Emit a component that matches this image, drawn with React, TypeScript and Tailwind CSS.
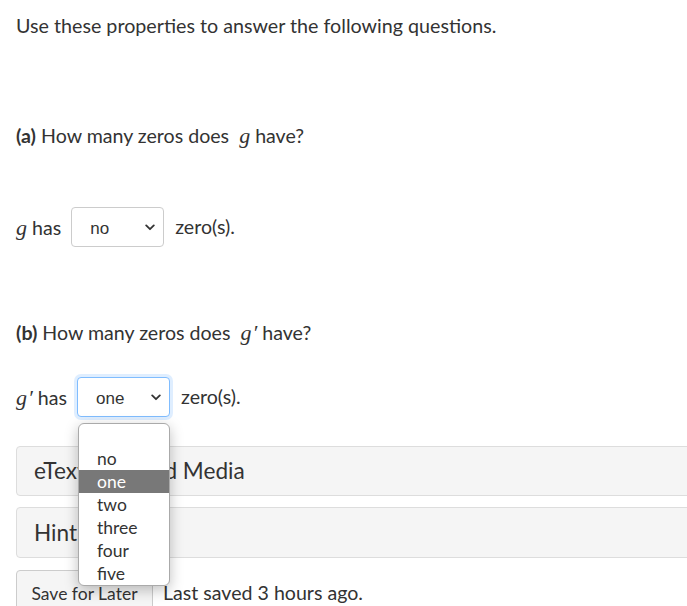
const OPTIONS = ['', 'no', 'one', 'two', 'three', 'four', 'five'];

function Chevron() {
  return (
    <svg width="10" height="7" viewBox="0 0 10 7" aria-hidden="true">
      <path d="M1.2 1.4 L5 5.2 L8.8 1.4" fill="none" stroke="#333" strokeWidth="1.8" strokeLinecap="round" strokeLinejoin="round" />
    </svg>
  );
}

function MathVar({ prime }: { prime?: boolean }) {
  return (
    <span className="font-['Liberation_Serif','Times_New_Roman',serif] text-[22px] italic">
      g{prime && <span className="ml-[1px]">′</span>}
    </span>
  );
}

function SelectBox({ value, focused }: { value: string; focused?: boolean }) {
  return (
    <div
      className={`flex h-[40px] w-[93px] items-center justify-between rounded-[4px] border bg-white pl-[18px] pr-[8px] font-['Liberation_Sans',Arial,sans-serif] text-[17px] text-[#333] ${
        focused ? 'border-[#80bdff] shadow-[0_0_0_3px_rgba(128,189,255,0.25)]' : 'border-[#ccc]'
      }`}
    >
      <span className="pt-[3px]">{value}</span>
      <Chevron />
    </div>
  );
}

export default function App() {
  return (
    <div className="relative h-[606px] w-[687px] overflow-hidden bg-white font-['Lato','Open_Sans',sans-serif] text-[#333]">
      <div className="w-[720px] pl-4 pt-[12px]">
        <p className="h-[28px] text-[19.7px] leading-[28px]">Use these properties to answer the following questions.</p>

        <p className="mt-[82px] h-[28px] text-[19.6px] leading-[28px]">
          <span className="font-bold">(a)</span> How many zeros does&nbsp; <MathVar /> have?
        </p>

        <div className="mt-[57px] flex h-[40px] items-center text-[19.6px]">
          <span className="mr-[10px]">
            <MathVar /> has
          </span>
          <SelectBox value="no" />
          <span className="ml-[11px]">zero(s).</span>
        </div>

        <p className="mt-[72px] h-[28px] text-[19.6px] leading-[28px]">
          <span className="font-bold">(b)</span> How many zeros does&nbsp; <MathVar prime /> have?
        </p>

        <div className="mt-[30px] flex h-[40px] items-center text-[19.6px]">
          <span className="mr-[10px]">
            <MathVar prime /> has
          </span>
          <SelectBox value="one" focused />
          <span className="ml-[11px]">zero(s).</span>
        </div>

        <div className="mt-[29px] flex h-[50px] items-center rounded-[4px] border border-[#ddd] bg-[#f5f5f5] pl-[17px] text-[22.6px]">
          eTextbook and Media
        </div>

        <div className="mt-[11px] flex h-[51px] items-center rounded-[4px] border border-[#ddd] bg-[#f5f5f5] pl-[17px] text-[22.6px]">
          Hint
        </div>

        <div className="mt-[12px] flex items-start">
          <div className="flex h-[44px] w-[137px] items-start justify-center rounded-tl-[4px] border border-[#ccc] bg-[#f5f5f5] pt-[10px] text-[17.5px]">
            Save for Later
          </div>
          <span className="ml-[10px] pt-[8px] text-[19.6px]">Last saved 3 hours ago.</span>
        </div>
      </div>

      <ul className="absolute left-[78px] top-[423px] w-[92px] overflow-hidden rounded-[6px] border border-[#aaa] bg-white shadow-[0_4px_14px_rgba(0,0,0,0.25)]">
        {OPTIONS.map((opt, i) => (
          <li
            key={i}
            className={`h-[23px] pl-[18px] text-[17.5px] leading-[23px] ${
              opt === 'one' ? 'bg-[#787878] text-white' : 'text-[#333]'
            }`}
          >
            {opt}
          </li>
        ))}
      </ul>
    </div>
  );
}
